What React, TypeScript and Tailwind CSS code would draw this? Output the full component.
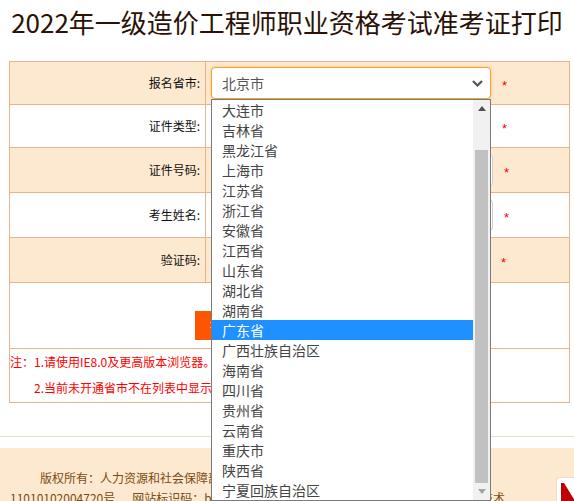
import React from "react";

const CJK = { fontFamily: '"Noto Sans CJK SC", "Noto Sans", sans-serif' };

const provinces = [
  "大连市", "吉林省", "黑龙江省", "上海市", "江苏省", "浙江省", "安徽省", "江西省",
  "山东省", "湖北省", "湖南省", "广东省", "广西壮族自治区", "海南省", "四川省",
  "贵州省", "云南省", "重庆市", "陕西省", "宁夏回族自治区",
];

function Star({ ml }: { ml: string }) {
  return (
    <span className={`${ml} relative top-[2px] text-[13px] leading-none text-[#ff0000]`} style={{ fontFamily: '"Liberation Sans", sans-serif' }}>
      *
    </span>
  );
}

function Row({ label, h, peach, children }: { label: string; h: string; peach?: boolean; children: React.ReactNode }) {
  return (
    <div className={`flex ${h} border-b border-[#e9b48b] ${peach ? "bg-[#fde9cf]" : "bg-white"}`}>
      <div className="flex w-[196px] shrink-0 items-center justify-end border-r border-[#e9b48b] pr-[5px] text-[12px] text-[#111]">
        {label}
      </div>
      <div className="flex flex-1 items-center pl-[5px]">{children}</div>
    </div>
  );
}

export default function App() {
  return (
    <div className="relative h-[501px] w-[574px] overflow-hidden bg-white" style={CJK}>
      <h1 className="h-[61px] whitespace-nowrap pt-[6px] text-center text-[26px] leading-[32px] text-[#2a1206]">
        2022年一级造价工程师职业资格考试准考证打印
      </h1>

      <div className="ml-[9px] w-[561px] border-x border-t border-[#e9b48b]">
        <Row label="报名省市:" h="h-[43px]" peach>
          <div className="flex h-[32px] w-[280px] items-center justify-between rounded-[4px] border border-[#f3a332] bg-white pl-[10px] pr-[4px] text-[14px] text-[#555] shadow-[0_0_3px_rgba(243,163,50,0.6)]">
            <span>北京市</span>
            <svg width="11" height="7" viewBox="0 0 11 7" className="mr-[3px]">
              <path d="M1 1 L5.5 5.5 L10 1" stroke="#555" strokeWidth="2.2" fill="none" />
            </svg>
          </div>
          <Star ml="ml-[11px]" />
        </Row>
        <Row label="证件类型:" h="h-[43px]">
          <div className="h-[32px] w-[280px] rounded-[4px] border border-[#ccc] bg-white" />
          <Star ml="ml-[11px]" />
        </Row>
        <Row label="证件号码:" h="h-[45px]" peach>
          <div className="h-[32px] w-[282px] rounded-[4px] border border-[#d0d0d0] bg-white" />
          <Star ml="ml-[11px]" />
        </Row>
        <Row label="考生姓名:" h="h-[45px]">
          <div className="h-[32px] w-[282px] rounded-[4px] border border-[#d0d0d0] bg-white" />
          <Star ml="ml-[11px]" />
        </Row>
        <Row label="验证码:" h="h-[45px]" peach>
          <div className="h-[32px] w-[280px] rounded-[4px] border border-[#d0d0d0] bg-white" />
          <Star ml="ml-[10px]" />
        </Row>
        <div className="h-[66px] border-b border-[#e9b48b] pt-[28px]">
          <div className="ml-[185px] flex h-[29px] w-[100px] items-center justify-center bg-[#ff5500] text-[14px] text-white">
            打印准考证
          </div>
        </div>
        <div className="h-[54px] border-b border-[#e9b48b] text-[12px] leading-[26px] text-[#ff0000]">
          <div className="whitespace-nowrap">注：1.请使用IE8.0及更高版本浏览器。</div>
          <div className="whitespace-nowrap pl-[24px]">2.当前未开通省市不在列表中显示。</div>
        </div>
      </div>

      <div className="mt-[33px] border-t border-[#eedbc9]" />
      <div className="h-[11px]" />
      <div className="flex h-[60px] overflow-hidden bg-[#fde9cf] text-[12px] leading-[20px] text-[#7c4c14]">
        <div className="w-[556px] shrink-0 pt-[20px]">
          <div className="whitespace-nowrap pl-[40px]">版权所有：人力资源和社会保障部人事考试中心</div>
          <div className="flex w-[505px] whitespace-nowrap pl-[10px]">
            <span>11010102004720号</span>
            <span className="ml-[17px]">网站标识码：bm17000001</span>
            <span className="ml-auto">技术</span>
          </div>
        </div>
        <div className="mt-[29px] h-[40px] w-[36px] shrink-0 rounded-[3px] border border-[#ecdcc8] bg-white">
          <svg width="36" height="40" viewBox="0 0 36 40">
            <polygon points="4,5 7,5 20,26 30,26 30,40 4,40" fill="#c00000" />
          </svg>
        </div>
      </div>

      <div className="absolute left-[211px] top-[99px] flex h-[402px] w-[280px] border border-[#7a7a7a] bg-white">
        <div className="flex-1">
          {provinces.map((p) => (
            <div
              key={p}
              className={`h-[20px] pl-[10px] text-[14px] leading-[20px] ${p === "广东省" ? "bg-[#1e90ff] text-white" : "text-[#444]"}`}
            >
              {p}
            </div>
          ))}
        </div>
        <div className="flex w-[17px] flex-col bg-[#f1f1f1]">
          <div className="flex h-[17px] items-center justify-center">
            <svg width="8" height="5" viewBox="0 0 8 5">
              <polygon points="0,5 8,5 4,0" fill="#505050" />
            </svg>
          </div>
          <div className="mx-[2px] mt-[33px] h-[333px] bg-[#c1c1c1]" />
          <div className="flex h-[17px] items-center justify-center">
            <svg width="8" height="5" viewBox="0 0 8 5">
              <polygon points="0,0 8,0 4,5" fill="#a3a3a3" />
            </svg>
          </div>
        </div>
      </div>
    </div>
  );
}
